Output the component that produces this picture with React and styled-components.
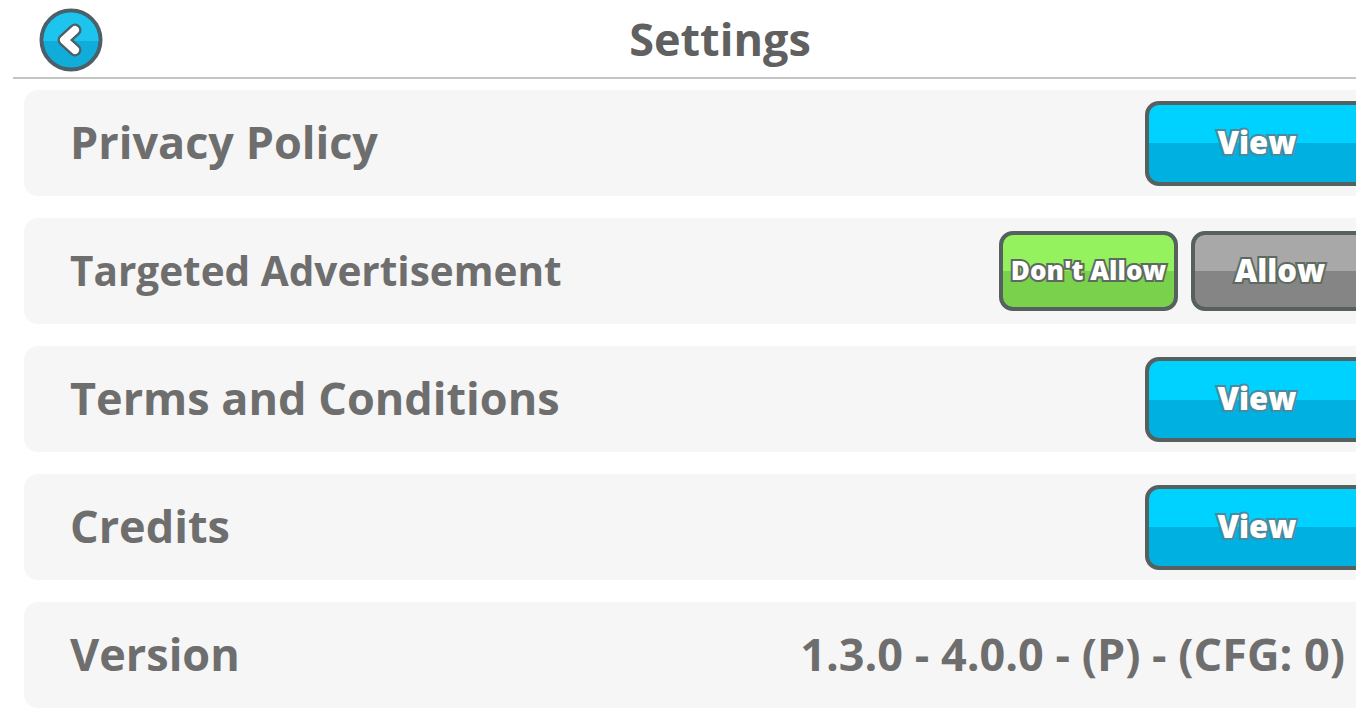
import React from "react";
import styled, { createGlobalStyle } from "styled-components";

const GlobalStyle = createGlobalStyle`
  html, body {
    margin: 0;
    padding: 0;
    height: 100%;
    background: #ffffff;
    overflow: hidden;
  }
  body {
    font-family: "Open Sans", "Liberation Sans", sans-serif;
  }
`;

const Screen = styled.div`
  width: 1356px;
  height: 720px;
  overflow: hidden;
  background: #ffffff;
`;

const Stage = styled.div`
  width: 1414px;
  margin-left: 13px;
`;

const Header = styled.header`
  height: 77px;
  border-bottom: 2px solid #c4c4c4;
  display: flex;
  align-items: center;
  position: relative;
  justify-content: center;
`;

const BackButton = styled.button`
  position: absolute;
  left: 26px;
  top: 8px;
  width: 64px;
  height: 64px;
  padding: 0;
  border: none;
  background: none;
  cursor: pointer;
`;

const Title = styled.h1`
  margin: 0;
  font-size: 45px;
  font-weight: 700;
  color: #606060;
  line-height: 1;
`;

const List = styled.div`
  display: flex;
  flex-direction: column;
  gap: 22px;
  padding: 11px 11px 0;
`;

const Row = styled.div`
  height: 106px;
  box-sizing: border-box;
  background: #f6f6f6;
  border-radius: 14px;
  padding: 0 47px 0 46px;
  display: flex;
  align-items: center;
  justify-content: space-between;
`;

const Label = styled.span`
  font-size: ${(p) => p.$size || 45}px;
  font-weight: 700;
  color: #6e6e6e;
  line-height: 1;
  margin-bottom: ${(p) => (p.$size ? 0 : 3)}px;
`;

const Actions = styled.div`
  display: flex;
  gap: 13px;
`;

const palettes = {
  blue: ["#00d2ff", "#00b0e0"],
  green: ["#94f25e", "#7ad24c"],
  gray: ["#a8a8a8", "#858585"],
};

const GameButton = styled.button`
  width: ${(p) => p.$width}px;
  height: ${(p) => p.$height}px;
  box-sizing: border-box;
  border: 4px solid #55605f;
  border-radius: 14px;
  padding: 0 0 3px;
  background: linear-gradient(
    ${(p) => palettes[p.$tone][0]} 50%,
    ${(p) => palettes[p.$tone][1]} 50%
  );
  font-family: inherit;
  font-weight: 800;
  font-size: ${(p) => p.$font}px;
  color: #ffffff;
  -webkit-text-stroke: 4px ${(p) => (p.$tone === "blue" ? "#4a8a9c" : "#5f6a5f")};
  paint-order: stroke fill;
  cursor: pointer;
`;

const VersionText = styled.span`
  font-size: 45px;
  font-weight: 700;
  color: #6e6e6e;
  line-height: 1;
  margin-right: 24px;
  margin-bottom: 3px;
`;

function BackIcon() {
  return (
    <svg width="64" height="64" viewBox="0 0 64 64">
      <defs>
        <clipPath id="backTop">
          <rect x="0" y="0" width="64" height="33" />
        </clipPath>
      </defs>
      <circle cx="32" cy="32" r="29.5" fill="#10addb" stroke="#4b6068" strokeWidth="4" />
      <circle cx="32" cy="32" r="27.5" fill="#1cc4ee" clipPath="url(#backTop)" />
      <path
        d="M36 22 L25 32 L36 42"
        fill="none"
        stroke="#4b6068"
        strokeWidth="13"
        strokeLinecap="round"
        strokeLinejoin="round"
      />
      <path
        d="M36 22 L25 32 L36 42"
        fill="none"
        stroke="#ffffff"
        strokeWidth="8"
        strokeLinecap="round"
        strokeLinejoin="round"
      />
    </svg>
  );
}

function ViewButton() {
  return (
    <GameButton $tone="blue" $width={224} $height={85} $font={31}>
      View
    </GameButton>
  );
}

export default function App() {
  return (
    <Screen>
      <GlobalStyle />
      <Stage>
        <Header>
          <BackButton aria-label="Back">
            <BackIcon />
          </BackButton>
          <Title>Settings</Title>
        </Header>
        <List>
          <Row>
            <Label>Privacy Policy</Label>
            <ViewButton />
          </Row>
          <Row>
            <Label $size={40.5}>Targeted Advertisement</Label>
            <Actions>
              <GameButton $tone="green" $width={179} $height={80} $font={26}>
                Don't Allow
              </GameButton>
              <GameButton $tone="gray" $width={178} $height={80} $font={31}>
                Allow
              </GameButton>
            </Actions>
          </Row>
          <Row>
            <Label>Terms and Conditions</Label>
            <ViewButton />
          </Row>
          <Row>
            <Label>Credits</Label>
            <ViewButton />
          </Row>
          <Row>
            <Label>Version</Label>
            <VersionText>1.3.0 - 4.0.0 - (P) - (CFG: 0)</VersionText>
          </Row>
        </List>
      </Stage>
    </Screen>
  );
}
